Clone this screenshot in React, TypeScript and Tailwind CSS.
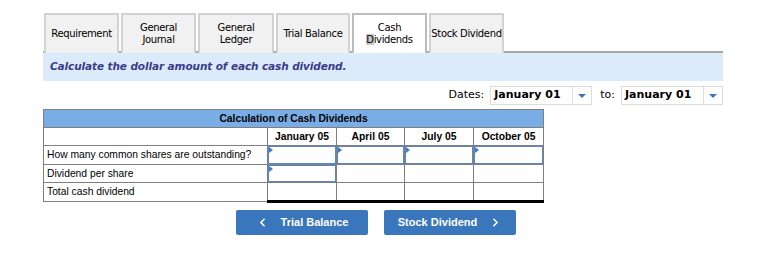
import { ChevronLeft, ChevronRight } from 'lucide-react';

const tabs = [
  { label: ['Requirement'], w: 'w-[75px]' },
  { label: ['General', 'Journal'], w: 'w-[75px]' },
  { label: ['General', 'Ledger'], w: 'w-[76px]' },
  { label: ['Trial Balance'], w: 'w-[74px]' },
  { label: ['Cash', 'Dividends'], w: 'w-[75px]', active: true },
  { label: ['Stock Dividend'], w: 'w-[75px]' },
];

const cols = ['January 05', 'April 05', 'July 05', 'October 05'];

function InputCell() {
  return (
    <div className="relative h-full border border-[#5b86c4] bg-white">
      <span className="absolute left-0 top-0 h-0 w-0 border-t-[3px] border-b-[3px] border-l-[4px] border-t-transparent border-b-transparent border-l-[#3f7ad0]" />
    </div>
  );
}

function Select() {
  return (
    <div className="flex h-[19px] w-[102px] items-stretch border border-[#dcdcdc] bg-white">
      <span className="flex flex-1 items-center pl-[3px] text-[11px] font-bold text-black">January 01</span>
      <span className="flex w-[19px] items-center justify-center border-l border-[#dcdcdc]">
        <span className="h-0 w-0 border-l-[4px] border-r-[4px] border-t-[4px] border-l-transparent border-r-transparent border-t-[#3c74c4]" />
      </span>
    </div>
  );
}

export default function App() {
  return (
    <div className="h-[257px] w-[758px] bg-white" style={{ fontFamily: 'Verdana, "DejaVu Sans", sans-serif' }}>
      <div className="ml-[43px] w-[680px] pt-[13px]">
        <div className="flex gap-[2px] border-b-2 border-[#a9a9a9] pl-[1px]">
          {tabs.map((t) => (
            <div
              key={t.label.join(' ')}
              className={`${t.w} -mb-[2px] flex h-[40px] flex-col items-center justify-center whitespace-nowrap border-2 text-center text-[10px] leading-[12px] tracking-[-0.35px] text-black ${
                t.active ? 'border-b-0 border-[#bcbcbc] bg-white' : 'border-b-0 border-[#d2d2d2] bg-[#f1f1f1]'
              }`}
            >
              {t.label.map((l, i) =>
                t.active && i === 1 ? (
                  <span key={l}>
                    <span className="bg-[#c8c8c8]">D</span>ividends
                  </span>
                ) : (
                  <span key={l}>{l}</span>
                )
              )}
            </div>
          ))}
        </div>

        <div className="flex h-[28px] items-center bg-[#dbebfa] pl-[7px] text-[10.5px] font-bold italic tracking-[-0.1px] text-[#3b3b8a]">
          Calculate the dollar amount of each cash dividend.
        </div>

        <div className="mt-[5px] flex items-center justify-end gap-[6px] text-[11px] text-black">
          <span>Dates:</span>
          <Select />
          <span className="ml-[2px]">to:</span>
          <Select />
        </div>

        <table
          className="mt-[4px] w-[500px] table-fixed border-collapse text-[10.3px] text-black"
          style={{ fontFamily: '"Liberation Sans", Arial, sans-serif' }}
        >
          <colgroup>
            <col className="w-[224px]" />
            <col className="w-[69px]" />
            <col className="w-[68px]" />
            <col className="w-[69px]" />
            <col className="w-[70px]" />
          </colgroup>
          <tbody>
            <tr className="h-[18px] bg-[#79ade6]">
              <td colSpan={5} className="border border-[#7f7f7f] text-center font-bold">
                Calculation of Cash Dividends
              </td>
            </tr>
            <tr className="h-[18px]">
              <td className="border border-[#7f7f7f]" />
              {cols.map((c) => (
                <td key={c} className="border border-[#7f7f7f] text-center font-bold">
                  {c}
                </td>
              ))}
            </tr>
            <tr className="h-[19px]">
              <td className="border border-[#7f7f7f] pl-[3px]">How many common shares are outstanding?</td>
              {cols.map((c) => (
                <td key={c} className="h-[19px] border border-[#7f7f7f] p-0">
                  <InputCell />
                </td>
              ))}
            </tr>
            <tr className="h-[18px]">
              <td className="border border-[#7f7f7f] pl-[3px]">Dividend per share</td>
              <td className="h-[18px] border border-[#7f7f7f] p-0">
                <InputCell />
              </td>
              <td className="border border-[#7f7f7f]" />
              <td className="border border-[#7f7f7f]" />
              <td className="border border-[#7f7f7f]" />
            </tr>
            <tr className="h-[19px]">
              <td className="border border-[#7f7f7f] pl-[3px]">Total cash dividend</td>
              <td className="border border-[#7f7f7f] border-t-black border-b-[3px] border-b-black" />
              <td className="border border-[#7f7f7f] border-t-black border-b-[3px] border-b-black" />
              <td className="border border-[#7f7f7f] border-t-black border-b-[3px] border-b-black" />
              <td className="border border-[#7f7f7f] border-t-black border-b-[3px] border-b-black" />
            </tr>
          </tbody>
        </table>

        <div
          className="ml-[193px] mt-[7px] flex gap-[16px] text-[11px] font-bold text-white"
          style={{ fontFamily: '"Liberation Sans", Arial, sans-serif' }}
        >
          <div className="flex h-[25px] w-[132px] items-center justify-center gap-[12px] rounded-[2px] bg-[#3a76bb]">
            <ChevronLeft size={13} strokeWidth={3} />
            <span>Trial Balance</span>
          </div>
          <div className="flex h-[25px] w-[132px] items-center justify-center gap-[12px] rounded-[2px] bg-[#3a76bb]">
            <span>Stock Dividend</span>
            <ChevronRight size={13} strokeWidth={3} />
          </div>
        </div>
      </div>
    </div>
  );
}
